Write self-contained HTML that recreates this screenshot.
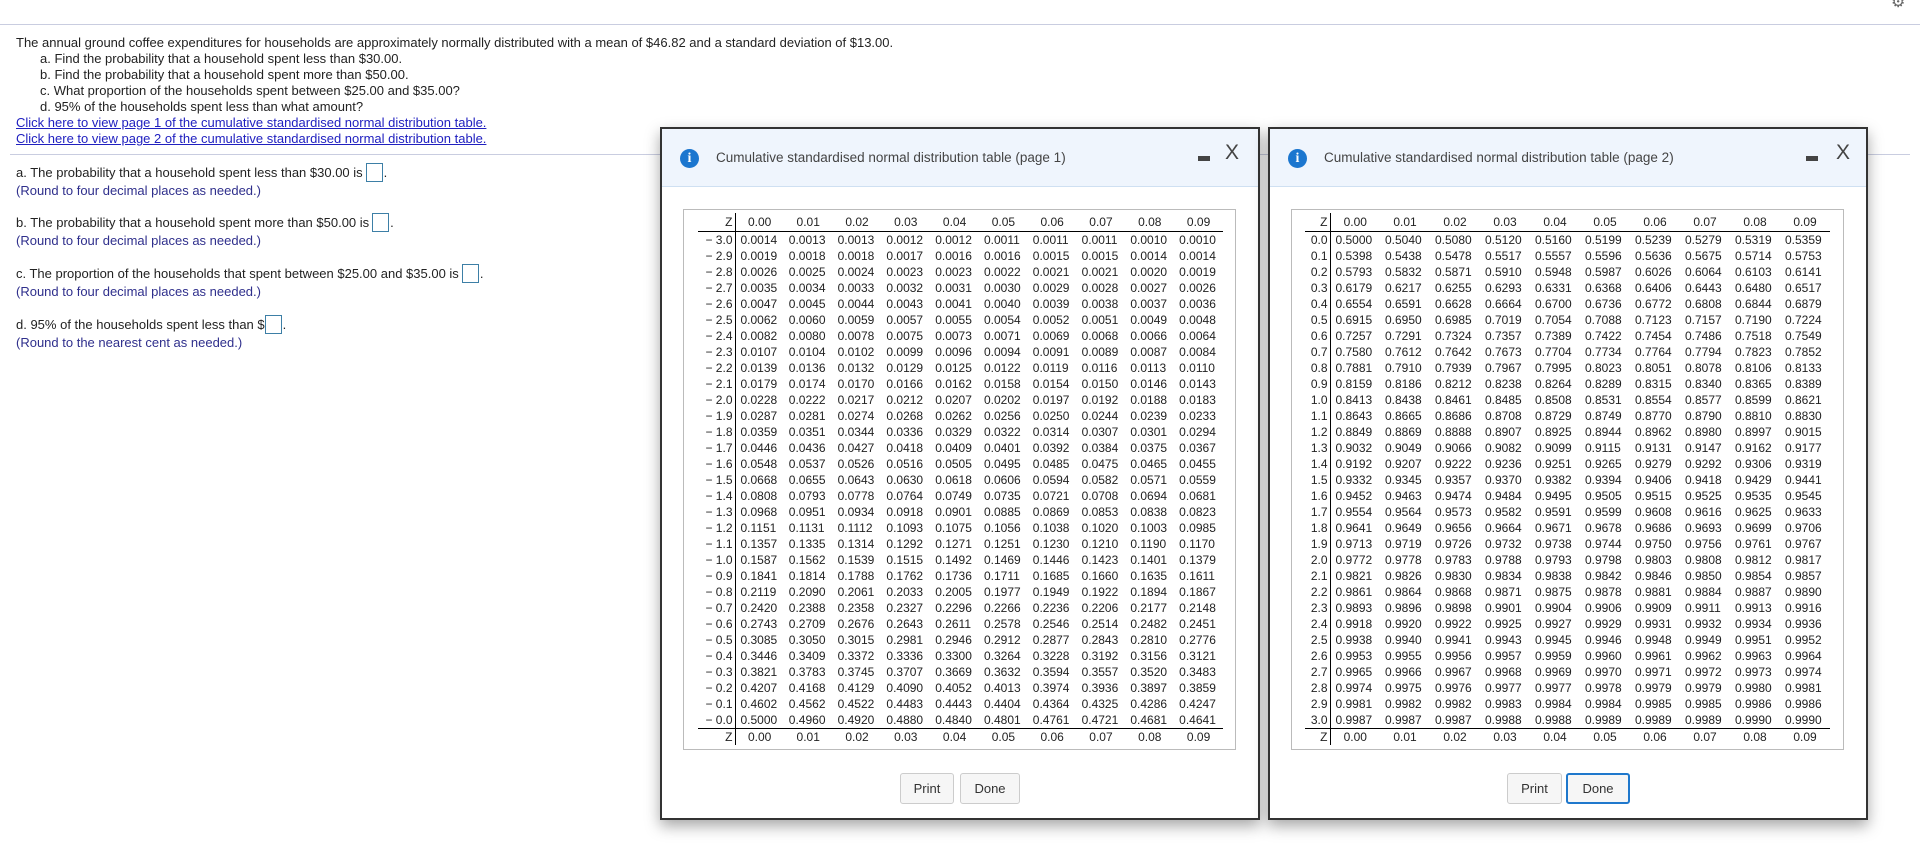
<!DOCTYPE html>
<html><head><meta charset="utf-8"><style>
*{margin:0;padding:0;box-sizing:border-box}
body{width:1920px;height:853px;overflow:hidden;background:#fff;font-family:"Liberation Sans",Arial,sans-serif;color:#222;position:relative}
.abs{position:absolute;white-space:nowrap}
.t{font-size:13px;line-height:16px}
.lnk{color:#2020c0;text-decoration:underline}
.nv{color:#2f2f8c}
.box{display:inline-block;width:17px;height:19px;border:1px solid #3d7fa6;vertical-align:middle;margin:0 1px 0 3px;position:relative;top:-1px}
.dlg{position:absolute;top:127px;width:600px;height:693px;border:2px solid #333;background:#fff;box-shadow:0 6px 14px rgba(0,0,0,.35)}
.hdr{position:absolute;left:0;top:0;right:0;height:58px;background:#eff5fd;border-bottom:1px solid #cfe0f2}
.ico{position:absolute;left:18px;top:20px;width:19px;height:19px;border-radius:50%;background:#1b76cf;color:#fff;font:bold 14px/19px "Liberation Serif",serif;text-align:center}
.ttl{position:absolute;left:54px;top:21px;font-size:13.5px;color:#444}
.mn{position:absolute;top:27px;width:12px;height:5px;background:#444}
.cl{position:absolute;top:12px;font-size:21px;color:#444;font-weight:normal}
.tb{position:absolute;left:21px;top:80px;width:553px;height:541px;border:1px solid #bbb}
table{position:absolute;top:3px;border-collapse:collapse;table-layout:fixed;font-size:12px;color:#222}
td{height:16px;line-height:16px;padding:0;white-space:nowrap;overflow:visible}
td.z{text-align:right;padding-right:2px;border-right:1px solid #000}
td.d{padding-left:5px}
tr.h td{height:18px;border-bottom:1px solid #000}
tr.h td.d,tr.f td.d{text-align:center;padding-left:0}
tr.f td{border-top:1px solid #000;height:17px}
.btn{position:absolute;top:644px;height:31px;border:1px solid #ccc;border-radius:3px;background:#f6f6f6;font-size:13px;color:#333;text-align:center;line-height:29px}
</style></head><body>
<div class="abs" style="left:0;top:24px;width:1920px;height:1px;background:#c9cde0"></div>
<div class="abs" style="left:10px;top:154px;width:1900px;height:1px;background:#c9cde0"></div>
<div class="abs" style="left:1891px;top:-8px;font-size:16px;color:#666">⚙</div>

<div class="abs t" style="left:16px;top:35px">The annual ground coffee expenditures for households are approximately normally distributed with a mean of $46.82 and a standard deviation of $13.00.</div>
<div class="abs t" style="left:40px;top:51px">a. Find the probability that a household spent less than $30.00.</div>
<div class="abs t" style="left:40px;top:67px">b. Find the probability that a household spent more than $50.00.</div>
<div class="abs t" style="left:40px;top:83px">c. What proportion of the households spent between $25.00 and $35.00?</div>
<div class="abs t" style="left:40px;top:99px">d. 95% of the households spent less than what amount?</div>
<div class="abs t lnk" style="left:16px;top:115px">Click here to view page 1 of the cumulative standardised normal distribution table.</div>
<div class="abs t lnk" style="left:16px;top:131px">Click here to view page 2 of the cumulative standardised normal distribution table.</div>

<div class="abs t" style="left:16px;top:164px">a. The probability that a household spent less than $30.00 is<span class="box"></span>.</div>
<div class="abs t nv" style="left:16px;top:183px">(Round to four decimal places as needed.)</div>
<div class="abs t" style="left:16px;top:214px">b. The probability that a household spent more than $50.00 is<span class="box"></span>.</div>
<div class="abs t nv" style="left:16px;top:233px">(Round to four decimal places as needed.)</div>
<div class="abs t" style="left:16px;top:265px">c. The proportion of the households that spent between $25.00 and $35.00 is<span class="box"></span>.</div>
<div class="abs t nv" style="left:16px;top:284px">(Round to four decimal places as needed.)</div>
<div class="abs t" style="left:16px;top:316px">d. 95% of the households spent less than $<span class="box" style="margin-left:0"></span>.</div>
<div class="abs t nv" style="left:16px;top:335px">(Round to the nearest cent as needed.)</div>

<div class="dlg" style="left:660px">
<div class="hdr"><div class="ico">i</div><div class="ttl">Cumulative standardised normal distribution table (page 1)</div><div class="mn" style="left:536px"></div><div class="cl" style="left:563px">X</div></div>
<div class="tb"><table style="left:14px;width:525px"><colgroup><col style="width:37px"><col span="10" style="width:48.8px"></colgroup>
<tr class="h"><td class="z">Z</td><td class="d">0.00</td><td class="d">0.01</td><td class="d">0.02</td><td class="d">0.03</td><td class="d">0.04</td><td class="d">0.05</td><td class="d">0.06</td><td class="d">0.07</td><td class="d">0.08</td><td class="d">0.09</td></tr>
<tr><td class="z">− 3.0</td><td class="d">0.0014</td><td class="d">0.0013</td><td class="d">0.0013</td><td class="d">0.0012</td><td class="d">0.0012</td><td class="d">0.0011</td><td class="d">0.0011</td><td class="d">0.0011</td><td class="d">0.0010</td><td class="d">0.0010</td></tr>
<tr><td class="z">− 2.9</td><td class="d">0.0019</td><td class="d">0.0018</td><td class="d">0.0018</td><td class="d">0.0017</td><td class="d">0.0016</td><td class="d">0.0016</td><td class="d">0.0015</td><td class="d">0.0015</td><td class="d">0.0014</td><td class="d">0.0014</td></tr>
<tr><td class="z">− 2.8</td><td class="d">0.0026</td><td class="d">0.0025</td><td class="d">0.0024</td><td class="d">0.0023</td><td class="d">0.0023</td><td class="d">0.0022</td><td class="d">0.0021</td><td class="d">0.0021</td><td class="d">0.0020</td><td class="d">0.0019</td></tr>
<tr><td class="z">− 2.7</td><td class="d">0.0035</td><td class="d">0.0034</td><td class="d">0.0033</td><td class="d">0.0032</td><td class="d">0.0031</td><td class="d">0.0030</td><td class="d">0.0029</td><td class="d">0.0028</td><td class="d">0.0027</td><td class="d">0.0026</td></tr>
<tr><td class="z">− 2.6</td><td class="d">0.0047</td><td class="d">0.0045</td><td class="d">0.0044</td><td class="d">0.0043</td><td class="d">0.0041</td><td class="d">0.0040</td><td class="d">0.0039</td><td class="d">0.0038</td><td class="d">0.0037</td><td class="d">0.0036</td></tr>
<tr><td class="z">− 2.5</td><td class="d">0.0062</td><td class="d">0.0060</td><td class="d">0.0059</td><td class="d">0.0057</td><td class="d">0.0055</td><td class="d">0.0054</td><td class="d">0.0052</td><td class="d">0.0051</td><td class="d">0.0049</td><td class="d">0.0048</td></tr>
<tr><td class="z">− 2.4</td><td class="d">0.0082</td><td class="d">0.0080</td><td class="d">0.0078</td><td class="d">0.0075</td><td class="d">0.0073</td><td class="d">0.0071</td><td class="d">0.0069</td><td class="d">0.0068</td><td class="d">0.0066</td><td class="d">0.0064</td></tr>
<tr><td class="z">− 2.3</td><td class="d">0.0107</td><td class="d">0.0104</td><td class="d">0.0102</td><td class="d">0.0099</td><td class="d">0.0096</td><td class="d">0.0094</td><td class="d">0.0091</td><td class="d">0.0089</td><td class="d">0.0087</td><td class="d">0.0084</td></tr>
<tr><td class="z">− 2.2</td><td class="d">0.0139</td><td class="d">0.0136</td><td class="d">0.0132</td><td class="d">0.0129</td><td class="d">0.0125</td><td class="d">0.0122</td><td class="d">0.0119</td><td class="d">0.0116</td><td class="d">0.0113</td><td class="d">0.0110</td></tr>
<tr><td class="z">− 2.1</td><td class="d">0.0179</td><td class="d">0.0174</td><td class="d">0.0170</td><td class="d">0.0166</td><td class="d">0.0162</td><td class="d">0.0158</td><td class="d">0.0154</td><td class="d">0.0150</td><td class="d">0.0146</td><td class="d">0.0143</td></tr>
<tr><td class="z">− 2.0</td><td class="d">0.0228</td><td class="d">0.0222</td><td class="d">0.0217</td><td class="d">0.0212</td><td class="d">0.0207</td><td class="d">0.0202</td><td class="d">0.0197</td><td class="d">0.0192</td><td class="d">0.0188</td><td class="d">0.0183</td></tr>
<tr><td class="z">− 1.9</td><td class="d">0.0287</td><td class="d">0.0281</td><td class="d">0.0274</td><td class="d">0.0268</td><td class="d">0.0262</td><td class="d">0.0256</td><td class="d">0.0250</td><td class="d">0.0244</td><td class="d">0.0239</td><td class="d">0.0233</td></tr>
<tr><td class="z">− 1.8</td><td class="d">0.0359</td><td class="d">0.0351</td><td class="d">0.0344</td><td class="d">0.0336</td><td class="d">0.0329</td><td class="d">0.0322</td><td class="d">0.0314</td><td class="d">0.0307</td><td class="d">0.0301</td><td class="d">0.0294</td></tr>
<tr><td class="z">− 1.7</td><td class="d">0.0446</td><td class="d">0.0436</td><td class="d">0.0427</td><td class="d">0.0418</td><td class="d">0.0409</td><td class="d">0.0401</td><td class="d">0.0392</td><td class="d">0.0384</td><td class="d">0.0375</td><td class="d">0.0367</td></tr>
<tr><td class="z">− 1.6</td><td class="d">0.0548</td><td class="d">0.0537</td><td class="d">0.0526</td><td class="d">0.0516</td><td class="d">0.0505</td><td class="d">0.0495</td><td class="d">0.0485</td><td class="d">0.0475</td><td class="d">0.0465</td><td class="d">0.0455</td></tr>
<tr><td class="z">− 1.5</td><td class="d">0.0668</td><td class="d">0.0655</td><td class="d">0.0643</td><td class="d">0.0630</td><td class="d">0.0618</td><td class="d">0.0606</td><td class="d">0.0594</td><td class="d">0.0582</td><td class="d">0.0571</td><td class="d">0.0559</td></tr>
<tr><td class="z">− 1.4</td><td class="d">0.0808</td><td class="d">0.0793</td><td class="d">0.0778</td><td class="d">0.0764</td><td class="d">0.0749</td><td class="d">0.0735</td><td class="d">0.0721</td><td class="d">0.0708</td><td class="d">0.0694</td><td class="d">0.0681</td></tr>
<tr><td class="z">− 1.3</td><td class="d">0.0968</td><td class="d">0.0951</td><td class="d">0.0934</td><td class="d">0.0918</td><td class="d">0.0901</td><td class="d">0.0885</td><td class="d">0.0869</td><td class="d">0.0853</td><td class="d">0.0838</td><td class="d">0.0823</td></tr>
<tr><td class="z">− 1.2</td><td class="d">0.1151</td><td class="d">0.1131</td><td class="d">0.1112</td><td class="d">0.1093</td><td class="d">0.1075</td><td class="d">0.1056</td><td class="d">0.1038</td><td class="d">0.1020</td><td class="d">0.1003</td><td class="d">0.0985</td></tr>
<tr><td class="z">− 1.1</td><td class="d">0.1357</td><td class="d">0.1335</td><td class="d">0.1314</td><td class="d">0.1292</td><td class="d">0.1271</td><td class="d">0.1251</td><td class="d">0.1230</td><td class="d">0.1210</td><td class="d">0.1190</td><td class="d">0.1170</td></tr>
<tr><td class="z">− 1.0</td><td class="d">0.1587</td><td class="d">0.1562</td><td class="d">0.1539</td><td class="d">0.1515</td><td class="d">0.1492</td><td class="d">0.1469</td><td class="d">0.1446</td><td class="d">0.1423</td><td class="d">0.1401</td><td class="d">0.1379</td></tr>
<tr><td class="z">− 0.9</td><td class="d">0.1841</td><td class="d">0.1814</td><td class="d">0.1788</td><td class="d">0.1762</td><td class="d">0.1736</td><td class="d">0.1711</td><td class="d">0.1685</td><td class="d">0.1660</td><td class="d">0.1635</td><td class="d">0.1611</td></tr>
<tr><td class="z">− 0.8</td><td class="d">0.2119</td><td class="d">0.2090</td><td class="d">0.2061</td><td class="d">0.2033</td><td class="d">0.2005</td><td class="d">0.1977</td><td class="d">0.1949</td><td class="d">0.1922</td><td class="d">0.1894</td><td class="d">0.1867</td></tr>
<tr><td class="z">− 0.7</td><td class="d">0.2420</td><td class="d">0.2388</td><td class="d">0.2358</td><td class="d">0.2327</td><td class="d">0.2296</td><td class="d">0.2266</td><td class="d">0.2236</td><td class="d">0.2206</td><td class="d">0.2177</td><td class="d">0.2148</td></tr>
<tr><td class="z">− 0.6</td><td class="d">0.2743</td><td class="d">0.2709</td><td class="d">0.2676</td><td class="d">0.2643</td><td class="d">0.2611</td><td class="d">0.2578</td><td class="d">0.2546</td><td class="d">0.2514</td><td class="d">0.2482</td><td class="d">0.2451</td></tr>
<tr><td class="z">− 0.5</td><td class="d">0.3085</td><td class="d">0.3050</td><td class="d">0.3015</td><td class="d">0.2981</td><td class="d">0.2946</td><td class="d">0.2912</td><td class="d">0.2877</td><td class="d">0.2843</td><td class="d">0.2810</td><td class="d">0.2776</td></tr>
<tr><td class="z">− 0.4</td><td class="d">0.3446</td><td class="d">0.3409</td><td class="d">0.3372</td><td class="d">0.3336</td><td class="d">0.3300</td><td class="d">0.3264</td><td class="d">0.3228</td><td class="d">0.3192</td><td class="d">0.3156</td><td class="d">0.3121</td></tr>
<tr><td class="z">− 0.3</td><td class="d">0.3821</td><td class="d">0.3783</td><td class="d">0.3745</td><td class="d">0.3707</td><td class="d">0.3669</td><td class="d">0.3632</td><td class="d">0.3594</td><td class="d">0.3557</td><td class="d">0.3520</td><td class="d">0.3483</td></tr>
<tr><td class="z">− 0.2</td><td class="d">0.4207</td><td class="d">0.4168</td><td class="d">0.4129</td><td class="d">0.4090</td><td class="d">0.4052</td><td class="d">0.4013</td><td class="d">0.3974</td><td class="d">0.3936</td><td class="d">0.3897</td><td class="d">0.3859</td></tr>
<tr><td class="z">− 0.1</td><td class="d">0.4602</td><td class="d">0.4562</td><td class="d">0.4522</td><td class="d">0.4483</td><td class="d">0.4443</td><td class="d">0.4404</td><td class="d">0.4364</td><td class="d">0.4325</td><td class="d">0.4286</td><td class="d">0.4247</td></tr>
<tr><td class="z">− 0.0</td><td class="d">0.5000</td><td class="d">0.4960</td><td class="d">0.4920</td><td class="d">0.4880</td><td class="d">0.4840</td><td class="d">0.4801</td><td class="d">0.4761</td><td class="d">0.4721</td><td class="d">0.4681</td><td class="d">0.4641</td></tr>
<tr class="f"><td class="z">Z</td><td class="d">0.00</td><td class="d">0.01</td><td class="d">0.02</td><td class="d">0.03</td><td class="d">0.04</td><td class="d">0.05</td><td class="d">0.06</td><td class="d">0.07</td><td class="d">0.08</td><td class="d">0.09</td></tr>
</table></div>
<div class="btn" style="left:238px;width:54px">Print</div>
<div class="btn" style="left:298px;width:60px">Done</div>
</div>

<div class="dlg" style="left:1268px">
<div class="hdr"><div class="ico">i</div><div class="ttl">Cumulative standardised normal distribution table (page 2)</div><div class="mn" style="left:536px"></div><div class="cl" style="left:566px">X</div></div>
<div class="tb"><table style="left:13px;width:525px"><colgroup><col style="width:25px"><col span="10" style="width:50px"></colgroup>
<tr class="h"><td class="z">Z</td><td class="d">0.00</td><td class="d">0.01</td><td class="d">0.02</td><td class="d">0.03</td><td class="d">0.04</td><td class="d">0.05</td><td class="d">0.06</td><td class="d">0.07</td><td class="d">0.08</td><td class="d">0.09</td></tr>
<tr><td class="z">0.0</td><td class="d">0.5000</td><td class="d">0.5040</td><td class="d">0.5080</td><td class="d">0.5120</td><td class="d">0.5160</td><td class="d">0.5199</td><td class="d">0.5239</td><td class="d">0.5279</td><td class="d">0.5319</td><td class="d">0.5359</td></tr>
<tr><td class="z">0.1</td><td class="d">0.5398</td><td class="d">0.5438</td><td class="d">0.5478</td><td class="d">0.5517</td><td class="d">0.5557</td><td class="d">0.5596</td><td class="d">0.5636</td><td class="d">0.5675</td><td class="d">0.5714</td><td class="d">0.5753</td></tr>
<tr><td class="z">0.2</td><td class="d">0.5793</td><td class="d">0.5832</td><td class="d">0.5871</td><td class="d">0.5910</td><td class="d">0.5948</td><td class="d">0.5987</td><td class="d">0.6026</td><td class="d">0.6064</td><td class="d">0.6103</td><td class="d">0.6141</td></tr>
<tr><td class="z">0.3</td><td class="d">0.6179</td><td class="d">0.6217</td><td class="d">0.6255</td><td class="d">0.6293</td><td class="d">0.6331</td><td class="d">0.6368</td><td class="d">0.6406</td><td class="d">0.6443</td><td class="d">0.6480</td><td class="d">0.6517</td></tr>
<tr><td class="z">0.4</td><td class="d">0.6554</td><td class="d">0.6591</td><td class="d">0.6628</td><td class="d">0.6664</td><td class="d">0.6700</td><td class="d">0.6736</td><td class="d">0.6772</td><td class="d">0.6808</td><td class="d">0.6844</td><td class="d">0.6879</td></tr>
<tr><td class="z">0.5</td><td class="d">0.6915</td><td class="d">0.6950</td><td class="d">0.6985</td><td class="d">0.7019</td><td class="d">0.7054</td><td class="d">0.7088</td><td class="d">0.7123</td><td class="d">0.7157</td><td class="d">0.7190</td><td class="d">0.7224</td></tr>
<tr><td class="z">0.6</td><td class="d">0.7257</td><td class="d">0.7291</td><td class="d">0.7324</td><td class="d">0.7357</td><td class="d">0.7389</td><td class="d">0.7422</td><td class="d">0.7454</td><td class="d">0.7486</td><td class="d">0.7518</td><td class="d">0.7549</td></tr>
<tr><td class="z">0.7</td><td class="d">0.7580</td><td class="d">0.7612</td><td class="d">0.7642</td><td class="d">0.7673</td><td class="d">0.7704</td><td class="d">0.7734</td><td class="d">0.7764</td><td class="d">0.7794</td><td class="d">0.7823</td><td class="d">0.7852</td></tr>
<tr><td class="z">0.8</td><td class="d">0.7881</td><td class="d">0.7910</td><td class="d">0.7939</td><td class="d">0.7967</td><td class="d">0.7995</td><td class="d">0.8023</td><td class="d">0.8051</td><td class="d">0.8078</td><td class="d">0.8106</td><td class="d">0.8133</td></tr>
<tr><td class="z">0.9</td><td class="d">0.8159</td><td class="d">0.8186</td><td class="d">0.8212</td><td class="d">0.8238</td><td class="d">0.8264</td><td class="d">0.8289</td><td class="d">0.8315</td><td class="d">0.8340</td><td class="d">0.8365</td><td class="d">0.8389</td></tr>
<tr><td class="z">1.0</td><td class="d">0.8413</td><td class="d">0.8438</td><td class="d">0.8461</td><td class="d">0.8485</td><td class="d">0.8508</td><td class="d">0.8531</td><td class="d">0.8554</td><td class="d">0.8577</td><td class="d">0.8599</td><td class="d">0.8621</td></tr>
<tr><td class="z">1.1</td><td class="d">0.8643</td><td class="d">0.8665</td><td class="d">0.8686</td><td class="d">0.8708</td><td class="d">0.8729</td><td class="d">0.8749</td><td class="d">0.8770</td><td class="d">0.8790</td><td class="d">0.8810</td><td class="d">0.8830</td></tr>
<tr><td class="z">1.2</td><td class="d">0.8849</td><td class="d">0.8869</td><td class="d">0.8888</td><td class="d">0.8907</td><td class="d">0.8925</td><td class="d">0.8944</td><td class="d">0.8962</td><td class="d">0.8980</td><td class="d">0.8997</td><td class="d">0.9015</td></tr>
<tr><td class="z">1.3</td><td class="d">0.9032</td><td class="d">0.9049</td><td class="d">0.9066</td><td class="d">0.9082</td><td class="d">0.9099</td><td class="d">0.9115</td><td class="d">0.9131</td><td class="d">0.9147</td><td class="d">0.9162</td><td class="d">0.9177</td></tr>
<tr><td class="z">1.4</td><td class="d">0.9192</td><td class="d">0.9207</td><td class="d">0.9222</td><td class="d">0.9236</td><td class="d">0.9251</td><td class="d">0.9265</td><td class="d">0.9279</td><td class="d">0.9292</td><td class="d">0.9306</td><td class="d">0.9319</td></tr>
<tr><td class="z">1.5</td><td class="d">0.9332</td><td class="d">0.9345</td><td class="d">0.9357</td><td class="d">0.9370</td><td class="d">0.9382</td><td class="d">0.9394</td><td class="d">0.9406</td><td class="d">0.9418</td><td class="d">0.9429</td><td class="d">0.9441</td></tr>
<tr><td class="z">1.6</td><td class="d">0.9452</td><td class="d">0.9463</td><td class="d">0.9474</td><td class="d">0.9484</td><td class="d">0.9495</td><td class="d">0.9505</td><td class="d">0.9515</td><td class="d">0.9525</td><td class="d">0.9535</td><td class="d">0.9545</td></tr>
<tr><td class="z">1.7</td><td class="d">0.9554</td><td class="d">0.9564</td><td class="d">0.9573</td><td class="d">0.9582</td><td class="d">0.9591</td><td class="d">0.9599</td><td class="d">0.9608</td><td class="d">0.9616</td><td class="d">0.9625</td><td class="d">0.9633</td></tr>
<tr><td class="z">1.8</td><td class="d">0.9641</td><td class="d">0.9649</td><td class="d">0.9656</td><td class="d">0.9664</td><td class="d">0.9671</td><td class="d">0.9678</td><td class="d">0.9686</td><td class="d">0.9693</td><td class="d">0.9699</td><td class="d">0.9706</td></tr>
<tr><td class="z">1.9</td><td class="d">0.9713</td><td class="d">0.9719</td><td class="d">0.9726</td><td class="d">0.9732</td><td class="d">0.9738</td><td class="d">0.9744</td><td class="d">0.9750</td><td class="d">0.9756</td><td class="d">0.9761</td><td class="d">0.9767</td></tr>
<tr><td class="z">2.0</td><td class="d">0.9772</td><td class="d">0.9778</td><td class="d">0.9783</td><td class="d">0.9788</td><td class="d">0.9793</td><td class="d">0.9798</td><td class="d">0.9803</td><td class="d">0.9808</td><td class="d">0.9812</td><td class="d">0.9817</td></tr>
<tr><td class="z">2.1</td><td class="d">0.9821</td><td class="d">0.9826</td><td class="d">0.9830</td><td class="d">0.9834</td><td class="d">0.9838</td><td class="d">0.9842</td><td class="d">0.9846</td><td class="d">0.9850</td><td class="d">0.9854</td><td class="d">0.9857</td></tr>
<tr><td class="z">2.2</td><td class="d">0.9861</td><td class="d">0.9864</td><td class="d">0.9868</td><td class="d">0.9871</td><td class="d">0.9875</td><td class="d">0.9878</td><td class="d">0.9881</td><td class="d">0.9884</td><td class="d">0.9887</td><td class="d">0.9890</td></tr>
<tr><td class="z">2.3</td><td class="d">0.9893</td><td class="d">0.9896</td><td class="d">0.9898</td><td class="d">0.9901</td><td class="d">0.9904</td><td class="d">0.9906</td><td class="d">0.9909</td><td class="d">0.9911</td><td class="d">0.9913</td><td class="d">0.9916</td></tr>
<tr><td class="z">2.4</td><td class="d">0.9918</td><td class="d">0.9920</td><td class="d">0.9922</td><td class="d">0.9925</td><td class="d">0.9927</td><td class="d">0.9929</td><td class="d">0.9931</td><td class="d">0.9932</td><td class="d">0.9934</td><td class="d">0.9936</td></tr>
<tr><td class="z">2.5</td><td class="d">0.9938</td><td class="d">0.9940</td><td class="d">0.9941</td><td class="d">0.9943</td><td class="d">0.9945</td><td class="d">0.9946</td><td class="d">0.9948</td><td class="d">0.9949</td><td class="d">0.9951</td><td class="d">0.9952</td></tr>
<tr><td class="z">2.6</td><td class="d">0.9953</td><td class="d">0.9955</td><td class="d">0.9956</td><td class="d">0.9957</td><td class="d">0.9959</td><td class="d">0.9960</td><td class="d">0.9961</td><td class="d">0.9962</td><td class="d">0.9963</td><td class="d">0.9964</td></tr>
<tr><td class="z">2.7</td><td class="d">0.9965</td><td class="d">0.9966</td><td class="d">0.9967</td><td class="d">0.9968</td><td class="d">0.9969</td><td class="d">0.9970</td><td class="d">0.9971</td><td class="d">0.9972</td><td class="d">0.9973</td><td class="d">0.9974</td></tr>
<tr><td class="z">2.8</td><td class="d">0.9974</td><td class="d">0.9975</td><td class="d">0.9976</td><td class="d">0.9977</td><td class="d">0.9977</td><td class="d">0.9978</td><td class="d">0.9979</td><td class="d">0.9979</td><td class="d">0.9980</td><td class="d">0.9981</td></tr>
<tr><td class="z">2.9</td><td class="d">0.9981</td><td class="d">0.9982</td><td class="d">0.9982</td><td class="d">0.9983</td><td class="d">0.9984</td><td class="d">0.9984</td><td class="d">0.9985</td><td class="d">0.9985</td><td class="d">0.9986</td><td class="d">0.9986</td></tr>
<tr><td class="z">3.0</td><td class="d">0.9987</td><td class="d">0.9987</td><td class="d">0.9987</td><td class="d">0.9988</td><td class="d">0.9988</td><td class="d">0.9989</td><td class="d">0.9989</td><td class="d">0.9989</td><td class="d">0.9990</td><td class="d">0.9990</td></tr>
<tr class="f"><td class="z">Z</td><td class="d">0.00</td><td class="d">0.01</td><td class="d">0.02</td><td class="d">0.03</td><td class="d">0.04</td><td class="d">0.05</td><td class="d">0.06</td><td class="d">0.07</td><td class="d">0.08</td><td class="d">0.09</td></tr>
</table></div>
<div class="btn" style="left:237px;width:55px">Print</div>
<div class="btn" style="left:296px;width:64px;border:2px solid #1f78cc;line-height:27px">Done</div>
</div>
</body></html>
